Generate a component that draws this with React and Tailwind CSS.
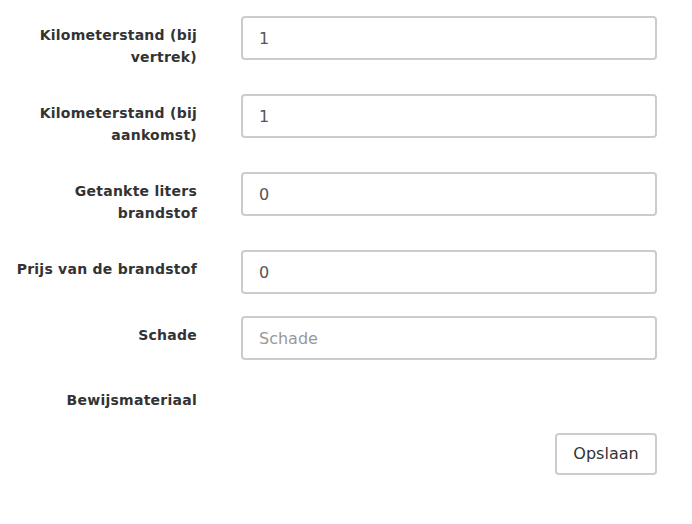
const FIELDS = [
  { label: 'Kilometerstand (bij vertrek)', value: '1' },
  { label: 'Kilometerstand (bij aankomst)', value: '1' },
  { label: 'Getankte liters brandstof', value: '0' },
  { label: 'Prijs van de brandstof', value: '0' },
  { label: 'Schade', value: '', placeholder: 'Schade' },
]

export default function App() {
  return (
    <div className="min-h-[524px] bg-white pt-4 pr-[35px] text-[#333]" style={{ fontFamily: '"DejaVu Sans", "Liberation Sans", sans-serif' }}>
      <form onSubmit={(e) => e.preventDefault()}>
        {FIELDS.map((f, i) => (
          <div key={i} className="flex items-start gap-[44px] mb-[22px]">
            <label className="w-[197px] shrink-0 text-right font-bold text-[14px] tracking-[0.25px] leading-[22px] pt-[8px] pb-[4px]">
              {f.label}
            </label>
            <input
              type="text"
              defaultValue={f.value}
              placeholder={f.placeholder}
              className="flex-1 h-[44px] px-4 text-[16px] text-[#555] placeholder:text-[#999] border-2 border-[#ccc] rounded-[4px] outline-none"
            />
          </div>
        ))}

        <div className="flex items-start gap-[44px] mb-[18px]">
          <label className="w-[197px] shrink-0 text-right font-bold text-[14px] tracking-[0.25px] leading-[22px] pt-[7px] pb-[4px]">
            Bewijsmateriaal
          </label>
          <div className="flex-1" />
        </div>

        <div className="flex justify-end">
          <button
            type="submit"
            className="w-[102px] h-[42px] text-[16px] text-[#333] bg-white border-2 border-[#ccc] rounded-[4px]"
          >
            Opslaan
          </button>
        </div>
      </form>
    </div>
  )
}
